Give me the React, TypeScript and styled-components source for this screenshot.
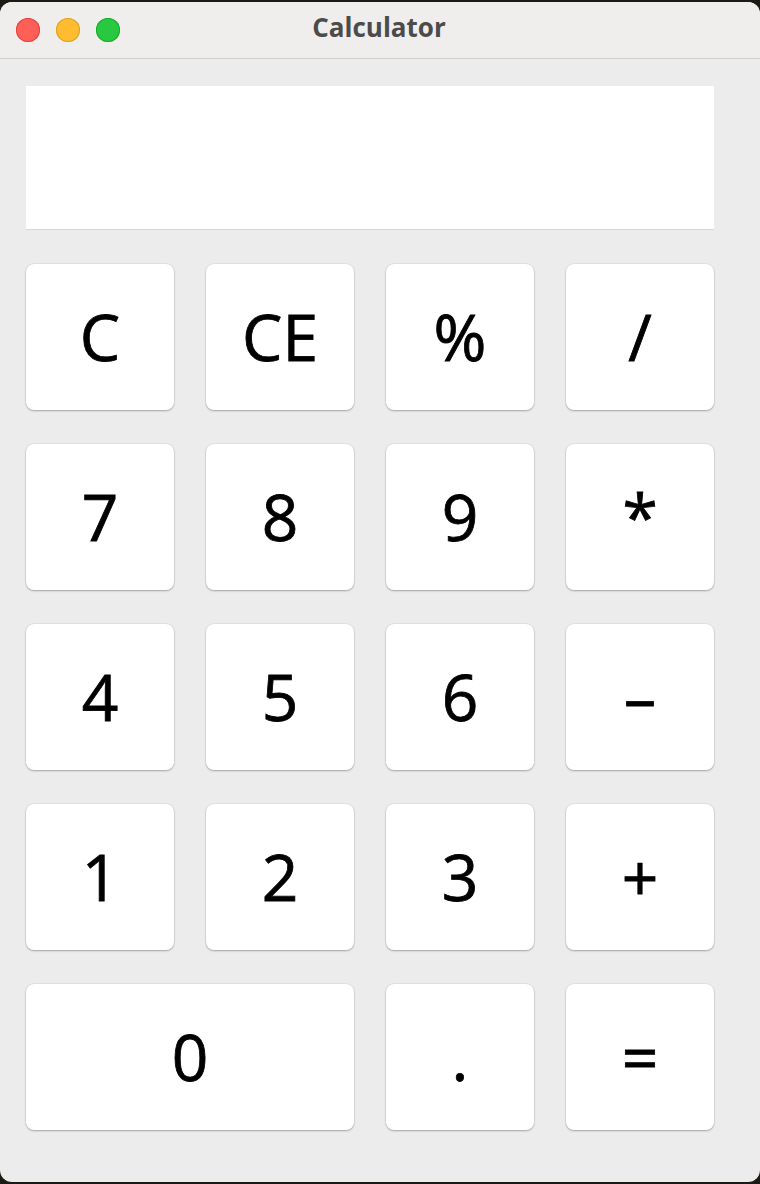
import React from "react";
import styled, { createGlobalStyle } from "styled-components";

const Global = createGlobalStyle`
  html, body { margin: 0; padding: 0; background: #1c1a14; }
  body { font-family: "Open Sans", "Liberation Sans", sans-serif; }
`;

const Window = styled.div`
  width: 760px;
  height: 1180px;
  margin-top: 2px;
  background: #ececec;
  border-radius: 12px;
  overflow: hidden;
  display: flex;
  flex-direction: column;
`;

const TitleBar = styled.div`
  height: 56px;
  flex: none;
  background: #efeeed;
  border-bottom: 1px solid #cfcfcf;
  position: relative;
  display: flex;
  align-items: center;
  justify-content: center;
`;

const Lights = styled.div`
  position: absolute;
  left: 16px;
  top: 16px;
  display: flex;
  gap: 16px;
`;

const Light = styled.span<{ $c: string; $b: string }>`
  width: 24px;
  height: 24px;
  border-radius: 50%;
  background: ${(p) => p.$c};
  box-shadow: inset 0 0 0 1px ${(p) => p.$b};
`;

const Title = styled.div`
  font-family: "Open Sans", "Liberation Sans", sans-serif;
  font-weight: 700;
  font-size: 26px;
  color: #4b4b4b;
  margin: -6px 0 0 -2px;
`;

const Body = styled.div`
  padding: 27px 46px 0 26px;
  display: flex;
  flex-direction: column;
  gap: 34px;
`;

const Display = styled.div`
  height: 143px;
  background: #ffffff;
  border-bottom: 1px solid #d6d6d6;
`;

const Keys = styled.div`
  display: grid;
  grid-template-columns: repeat(4, 148px);
  grid-auto-rows: 146px;
  column-gap: 32px;
  row-gap: 34px;
`;

const Key = styled.button<{ $span?: number }>`
  grid-column: span ${(p) => p.$span ?? 1};
  border: none;
  background: #ffffff;
  border-radius: 8px;
  box-shadow: 0 0 0 0.5px rgba(0, 0, 0, 0.08), 0 1px 2px rgba(0, 0, 0, 0.28);
  font-family: "Open Sans", "Liberation Sans", sans-serif;
  font-size: 64px;
  font-weight: 400;
  -webkit-text-stroke: 0.8px #000;
  color: #000;
  display: flex;
  align-items: center;
  justify-content: center;
  padding: 0;
  line-height: 1;
`;

const keys: { label: string; span?: number }[] = [
  { label: "C" }, { label: "CE" }, { label: "%" }, { label: "/" },
  { label: "7" }, { label: "8" }, { label: "9" }, { label: "*" },
  { label: "4" }, { label: "5" }, { label: "6" }, { label: "–" },
  { label: "1" }, { label: "2" }, { label: "3" }, { label: "+" },
  { label: "0", span: 2 }, { label: "." }, { label: "=" },
];

export default function App() {
  return (
    <>
      <Global />
      <Window>
        <TitleBar>
          <Lights>
            <Light $c="#ff5f57" $b="#e0443e" />
            <Light $c="#febc2e" $b="#dea123" />
            <Light $c="#28c840" $b="#1aab29" />
          </Lights>
          <Title>Calculator</Title>
        </TitleBar>
        <Body>
          <Display />
          <Keys>
            {keys.map((k) => (
              <Key key={k.label} $span={k.span}>
                {k.label}
              </Key>
            ))}
          </Keys>
        </Body>
      </Window>
    </>
  );
}
